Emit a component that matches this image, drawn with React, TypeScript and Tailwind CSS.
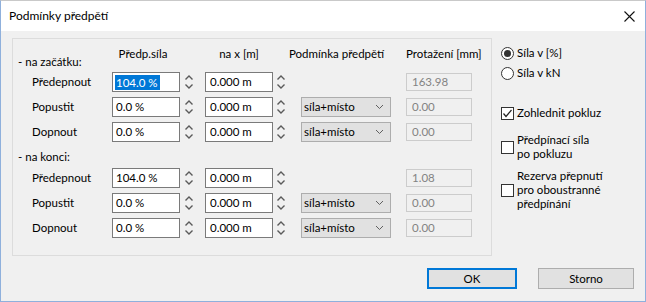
import React from 'react';

const FONT = { fontFamily: 'Lato, "Noto Sans", sans-serif' };

function Spinner() {
  return (
    <svg width="10" height="20" viewBox="0 0 10 20" className="block">
      <polyline points="1.5,7.5 5,4 8.5,7.5" fill="none" stroke="#5a5a5a" strokeWidth="1.4" />
      <polyline points="1.5,12.5 5,16 8.5,12.5" fill="none" stroke="#5a5a5a" strokeWidth="1.4" />
    </svg>
  );
}

function Chevron() {
  return (
    <svg width="9" height="6" viewBox="0 0 9 6" className="block">
      <polyline points="1,1 4.5,4.5 8,1" fill="none" stroke="#606060" strokeWidth="1" />
    </svg>
  );
}

type Row = {
  label: string;
  force: string;
  selected?: boolean;
  x: string;
  condition?: string;
  elong: string;
};

const START: Row[] = [
  { label: 'Předepnout', force: '104.0 %', selected: true, x: '0.000 m', elong: '163.98' },
  { label: 'Popustit', force: '0.0 %', x: '0.000 m', condition: 'síla+místo', elong: '0.00' },
  { label: 'Dopnout', force: '0.0 %', x: '0.000 m', condition: 'síla+místo', elong: '0.00' },
];

const END: Row[] = [
  { label: 'Předepnout', force: '104.0 %', x: '0.000 m', elong: '1.08' },
  { label: 'Popustit', force: '0.0 %', x: '0.000 m', condition: 'síla+místo', elong: '0.00' },
  { label: 'Dopnout', force: '0.0 %', x: '0.000 m', condition: 'síla+místo', elong: '0.00' },
];

function TableRow({ row }: { row: Row }) {
  return (
    <div className="flex items-center h-[20px] pl-[19px]">
      <div className="w-[80px]">{row.label}</div>
      <div className="w-[68px] h-[20px] bg-white border border-[#7a7a7a] flex items-center pl-[2px]">
        {row.selected ? (
          <span className="bg-[#0078d7] text-white pl-[1px] pr-[2px] leading-[15px]">{row.force}</span>
        ) : (
          <span className="pl-[1px]">{row.force}</span>
        )}
      </div>
      <div className="w-[25px] pl-[4px]">
        <Spinner />
      </div>
      <div className="w-[68px] h-[20px] bg-white border border-[#7a7a7a] flex items-center pl-[4px]">
        {row.x}
      </div>
      <div className="w-[28px] pl-[3px]">
        <Spinner />
      </div>
      <div className="w-[90px] h-[20px]">
        {row.condition && (
          <div className="h-full bg-[#e1e1e1] border border-[#adadad] flex items-center justify-between pl-[2px] pr-[6px]">
            <span>{row.condition}</span>
            <Chevron />
          </div>
        )}
      </div>
      <div className="ml-[15px] w-[66px] h-[18px] border border-[#cccccc] flex items-center pl-[5px] text-[#838383]">
        {row.elong}
      </div>
    </div>
  );
}

function Radio({ checked, label }: { checked?: boolean; label: string }) {
  return (
    <div className="flex items-center h-[20px]">
      <div className="w-[13px] h-[13px] rounded-full border border-[#333] bg-white flex items-center justify-center">
        {checked && <div className="w-[7px] h-[7px] rounded-full bg-[#333]" />}
      </div>
      <span className="ml-[3px]">{label}</span>
    </div>
  );
}

function Checkbox({ checked, children }: { checked?: boolean; children: React.ReactNode }) {
  return (
    <div className="flex items-center">
      <div className="w-[13px] h-[13px] shrink-0 border border-[#333] bg-white flex items-center justify-center">
        {checked && (
          <svg width="11" height="11" viewBox="0 0 11 11">
            <polyline points="1.5,5.5 4,8.5 9.5,2" fill="none" stroke="#222" strokeWidth="1.2" />
          </svg>
        )}
      </div>
      <div className="ml-[3px] leading-[14px]">{children}</div>
    </div>
  );
}

export default function App() {
  return (
    <div
      style={FONT}
      className="w-[646px] h-[302px] bg-[#f0f0f0] border border-[#8fb0dc] border-t-[#c9c9c9] flex flex-col text-[11.5px] text-black overflow-hidden"
    >
      {/* Title bar */}
      <div className="h-[30px] bg-white flex items-center justify-between pl-[8px] pr-[10px] shrink-0">
        <span className="text-[12px]">Podmínky předpětí</span>
        <svg width="11" height="11" viewBox="0 0 11 11">
          <path d="M0.5,0.5 L10.5,10.5 M10.5,0.5 L0.5,10.5" stroke="#111" strokeWidth="1.1" />
        </svg>
      </div>

      <div className="flex pl-[11px] pt-[7px]">
        {/* Group box */}
        <div className="w-[480px] h-[218px] border border-[#dcdcdc] flex flex-col">
          <div className="h-[33px] flex">
            <div className="w-[99px] pl-[5px] pt-[14px]">- na začátku:</div>
            <div className="w-[68px] text-center pt-[6px] -ml-[3px] mr-[3px]">Předp.síla</div>
            <div className="w-[25px]" />
            <div className="w-[68px] text-center pt-[6px]">na x [m]</div>
            <div className="w-[28px]" />
            <div className="w-[90px] text-center pt-[6px] -ml-[12px] mr-[12px] whitespace-nowrap">
              Podmínka předpětí
            </div>
            <div className="ml-[15px] w-[66px] text-center pt-[6px] whitespace-nowrap">Protažení [mm]</div>
          </div>
          <div className="flex flex-col gap-[5px]">
            {START.map((r, i) => (
              <TableRow key={i} row={r} />
            ))}
          </div>
          <div className="h-[26px] pl-[5px] pt-[6px]">- na konci:</div>
          <div className="flex flex-col gap-[5px]">
            {END.map((r, i) => (
              <TableRow key={i} row={r} />
            ))}
          </div>
        </div>

        {/* Right options */}
        <div className="ml-[9px] flex flex-col">
          <div className="pt-[5px]">
            <Radio checked label="Síla v [%]" />
            <Radio label="Síla v kN" />
          </div>
          <div className="mt-[23px]">
            <Checkbox checked>Zohlednit pokluz</Checkbox>
          </div>
          <div className="mt-[13px]">
            <Checkbox>
              Předpínací síla
              <br />
              po pokluzu
            </Checkbox>
          </div>
          <div className="mt-[8px]">
            <Checkbox>
              Rezerva přepnutí
              <br />
              pro oboustranné
              <br />
              předpínání
            </Checkbox>
          </div>
        </div>
      </div>

      {/* Buttons */}
      <div className="flex justify-end gap-[21px] pr-[11px] mt-[12px]">
        <button className="w-[90px] h-[21px] bg-[#e1e1e1] border-2 border-[#0078d7] flex items-center justify-center">
          OK
        </button>
        <button className="w-[96px] h-[21px] bg-[#e1e1e1] border border-[#adadad] flex items-center justify-center">
          Storno
        </button>
      </div>
    </div>
  );
}
